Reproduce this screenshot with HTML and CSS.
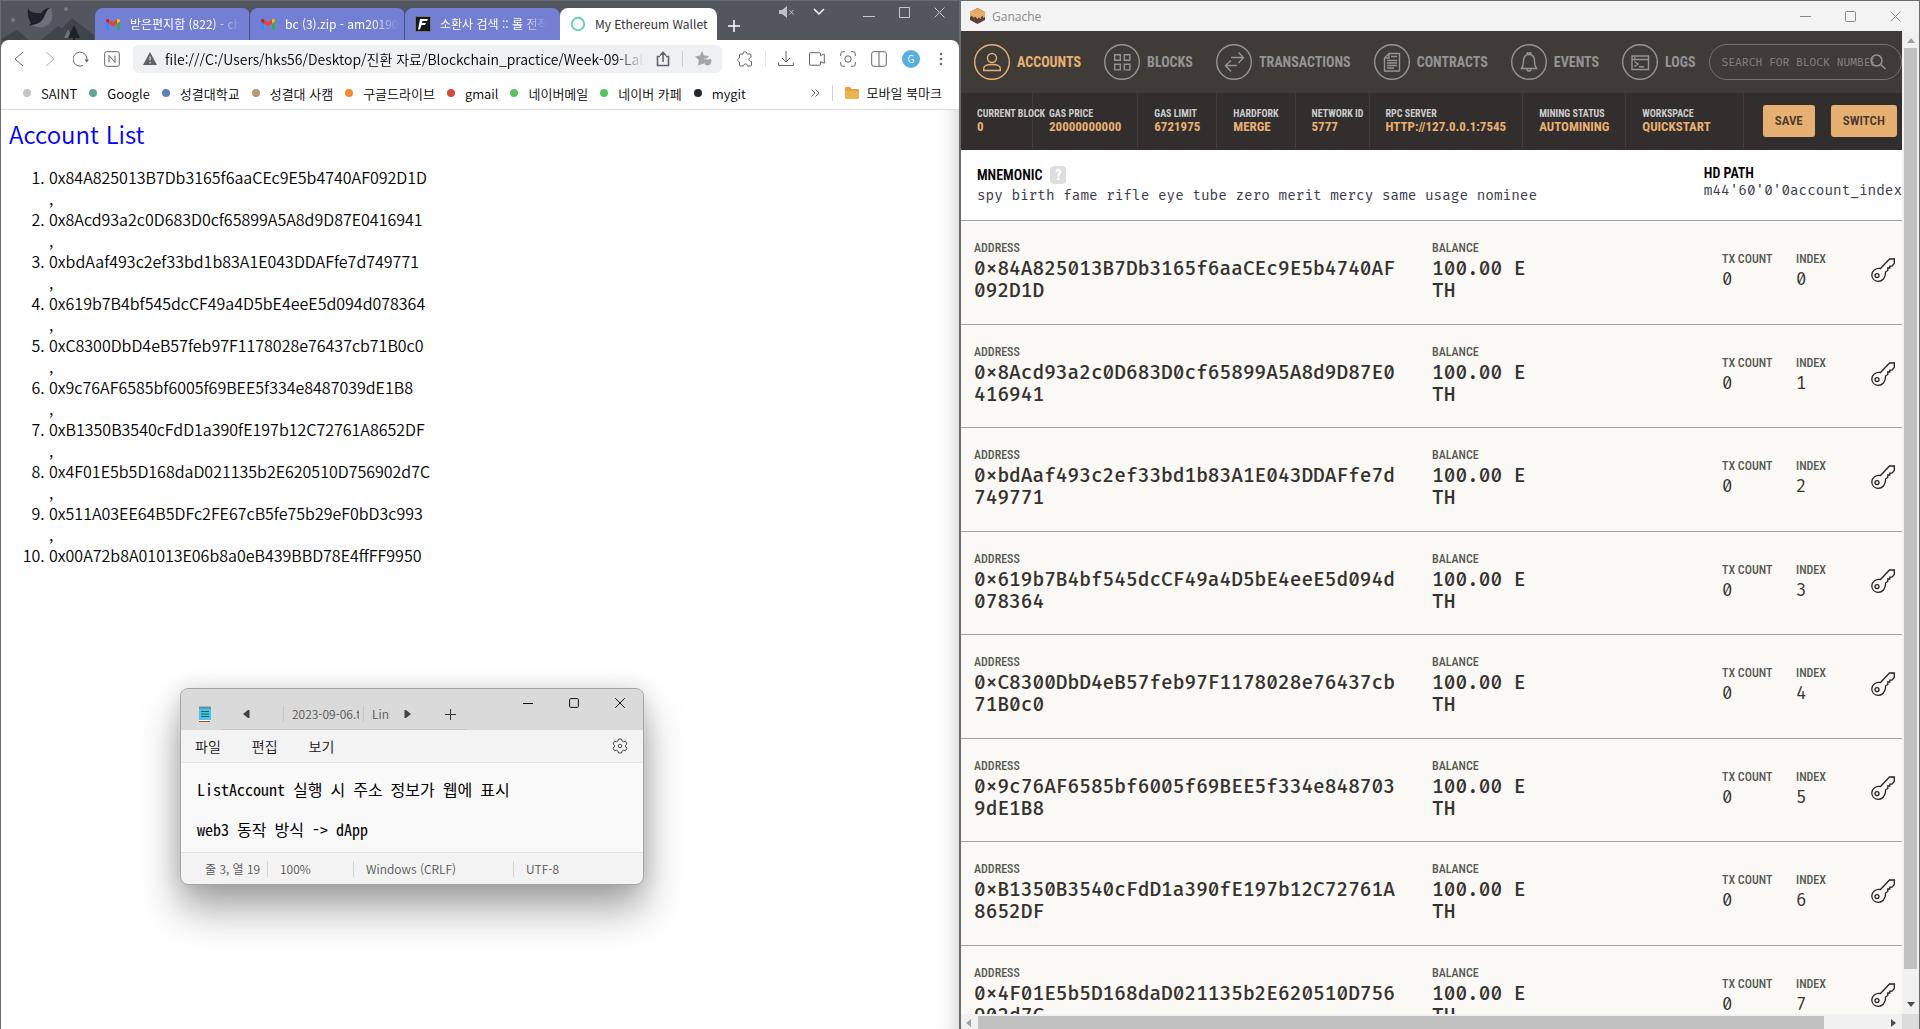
FILE: index.html
```html
<!DOCTYPE html>
<html lang="ko">
<head>
<meta charset="utf-8">
<title>My Ethereum Wallet</title>
<link rel="stylesheet" href="styles.css">
</head>
<body>
<svg class="defs" aria-hidden="true">
  <symbol id="key" viewBox="0 0 24 24"><path d="M9.500 10.500 L18.500 1 H23.300 V5.500 L21 8.200 H18.800 V10 H16.800 V12.500 L14.500 14 C15 20 11 23.500 7 23.300 C3 23 .8 20 .8 17 C.8 13 4.500 9.800 9.500 10.500Z"/><circle cx="6" cy="17.600" r="2"/></symbol>
  <symbol id="gmail" viewBox="0 0 16 12"><path fill="#4285f4" d="M1 3l3 2v7H2a1 1 0 0 1-1-1z"/><path fill="#34a853" d="M15 3l-3 2v7h2a1 1 0 0 0 1-1z"/><path fill="#c5221f" d="M1 3c0-2 2-2.500 3-1.500V5.500L1 3.500z"/><path fill="#fbbc04" d="M15 3c0-2-2-2.500-3-1.500V5.500l3-2z"/><path fill="#ea4335" d="M4 1.500l4 3 4-3V5.500L8 8.500 4 5.500z"/></symbol>
</svg>
<div class="desktop">

<section class="browser">
  <header class="tabstrip">
    <svg class="theme" width="94" height="39" viewBox="0 0 94 39" aria-hidden="true">
      <path fill="#3f434c" d="M0 38L16 29 28 39H0zM40 39L57 25l4 2L71 17 93 34v5z"/>
      <circle cx="12" cy="19" r="2" fill="#767b84"/><circle cx="65" cy="8" r="2" fill="#767b84"/>
      <path fill="#6b717b" d="M50 7c3 8 1 18-8 19-6 1-10-1-13-3 8 0 12-2 14-8 1-4 3-7 7-8z"/>
      <path fill="#1d2129" d="M27 7c2 5 7 5 13 5 2-3 5-5 9-5-7 4-3 15-18 17l-3 1 2-3c-3-4-4-9-3-15z"/>
      <path fill="#6b717b" d="M67 28l4 9h-8z"/><path fill="#1d2129" d="M73 24l6 13h-5v2h-2v-2h-5z"/>
    </svg>
    <nav class="tabs">
      <a class="tab" href="#"><svg width="16" height="12"><use href="#gmail"/></svg><span class="fade">받은편지함 (822) - ch</span></a>
      <a class="tab" href="#"><svg width="16" height="12"><use href="#gmail"/></svg><span class="fade">bc (3).zip - am20190</span></a>
      <a class="tab" href="#"><svg width="16" height="16" viewBox="0 0 16 16"><rect x=".5" y=".5" width="15" height="15" rx="1" fill="#15181c" stroke="#777"/><path fill="#fff" d="M5 3h8l-1 2H7.500L7 7h4l-1 2H6.500L5 13.500H3z"/></svg><span class="fade">소환사 검색 :: 롤 전적</span></a>
      <a class="tab active" href="#"><svg width="16" height="16" viewBox="0 0 16 16"><circle cx="8" cy="8" r="6.200" fill="none" stroke="#6bd0b4" stroke-width="2"/></svg><span>My Ethereum Wallet</span></a>
    </nav>
    <button class="newtab" aria-label="새 탭"><svg width="12" height="12" viewBox="0 0 12 12"><path d="M6 0v12M0 6h12" stroke="#fff" stroke-width="1.500"/></svg></button>
    <div class="wincontrols">
      <button aria-label="음소거"><svg width="16" height="12" viewBox="0 0 16 12"><path fill="#bfc2c6" d="M0 4h3l5-4v12L3 8H0z"/><path d="M10.500 4l4 4.500m0-4.500l-4 4.500" stroke="#bfc2c6"/></svg></button>
      <button aria-label="탭 목록"><svg width="12" height="8" viewBox="0 0 12 8"><path d="M1 1l5 5 5-5" stroke="#fff" stroke-width="1.500" fill="none"/></svg></button>
      <button aria-label="최소화"><svg width="12" height="11" viewBox="0 0 12 11"><path d="M0 9.500h12" stroke="#c5c7ca"/></svg></button>
      <button aria-label="최대화"><svg width="11" height="11" viewBox="0 0 11 11"><path d="M.5.5h10v10H.5z" stroke="#c5c7ca" fill="none"/></svg></button>
      <button aria-label="닫기"><svg width="11" height="11" viewBox="0 0 11 11"><path d="M.5.5l10 10m0-10l-10 10" stroke="#c5c7ca"/></svg></button>
    </div>
  </header>
  <div class="chrome">
    <div class="toolbar">
      <button aria-label="뒤로"><svg width="16" height="16" viewBox="0 0 16 16"><path d="M12 1L4 8l8 7"/></svg></button>
      <button aria-label="앞으로" class="dim"><svg width="16" height="16" viewBox="0 0 16 16"><path d="M4 1l8 7-8 7"/></svg></button>
      <button aria-label="새로고침"><svg width="16" height="16" viewBox="0 0 16 16"><path d="M10 14.500A7 7 0 1 1 14 9"/><path d="M11.500 8.500h4.500l-2.200 3z" fill="#5f6368" stroke="none"/></svg></button>
      <button aria-label="네이버"><svg width="16" height="16" viewBox="0 0 16 16"><rect x=".7" y=".7" width="14.600" height="14.600" rx="2"/><path d="M5 11.500v-7l6 7v-7"/></svg></button>
      <div class="address">
        <svg width="14" height="13" viewBox="0 0 14 13"><path d="M7 0l7 13H0z" fill="#5f6368" stroke="none"/><path d="M7 4.500v4M7 10v1.500" stroke="#fff"/></svg>
        <input class="url" aria-label="주소" value="file:///C:/Users/hks56/Desktop/진환 자료/Blockchain_practice/Week-09-Lab/L">
        <button aria-label="공유"><svg width="14" height="16" viewBox="0 0 14 16"><path d="M4 5.500H1.500v9h11v-9H10M7 11V1.500M4 4.500l3-3 3 3" stroke-width="1.600"/></svg></button>
        <i class="rule"></i>
        <button aria-label="북마크"><svg width="18" height="16" viewBox="0 0 18 16"><path d="M7 0l2 4.500 5 .5-2 2.500H9v5l-6 2 .8-5.500L0 5.500 5 4.500z" fill="#a3a5a8" stroke="none"/><path d="M9 8.500c1.500-1 2.500-.5 3.500.5 1-1 2.500-1.500 4-.5 0 3-1 6-4 6s-3.500-3-3.500-6z" fill="#a3a5a8" stroke="none"/></svg></button>
      </div>
      <button aria-label="확장"><svg width="16" height="16" viewBox="0 0 16 16"><path d="M3.500 3H6a2 2 0 0 1 4-.5l.2.5H13a1 1 0 0 1 1 1v2.500c-1.500 0-2 1-2 2s.8 2 2.500 2V14a1 1 0 0 1-1 1h-3c0-1.500-1-2-2-2s-2 .8-2 2H3.500a1 1 0 0 1-1-1v-3C1 11 .8 9.800.8 8.800s.7-2 1.700-2V4a1 1 0 0 1 1-1z"/></svg></button>
      <i class="rule light"></i>
      <button aria-label="다운로드"><svg width="16" height="16" viewBox="0 0 16 16"><path d="M8 0v11M4 7l4 4 4-4M.7 11.500V14.500h14.600V11.500"/></svg></button>
      <button aria-label="녹화"><svg width="16" height="14" viewBox="0 0 16 14"><path d="M1.500.7h9a1 1 0 0 1 1 1v2l3-1.500h.8v9l-3.800-1.500v2.500a1 1 0 0 1-1 1h-9a1 1 0 0 1-1-1V1.700a1 1 0 0 1 1-1z"/></svg></button>
      <button aria-label="캡처"><svg width="16" height="16" viewBox="0 0 16 16"><path d="M.7 5V2.700a2 2 0 0 1 2-2H5M11 .7h2.300a2 2 0 0 1 2 2V5M15.300 11v2.300a2 2 0 0 1-2 2H11M5 15.300H2.700a2 2 0 0 1-2-2V11"/><circle cx="8" cy="8" r="3.200"/></svg></button>
      <button aria-label="사이드바"><svg width="16" height="16" viewBox="0 0 16 16"><rect x=".7" y=".7" width="14.600" height="14.600" rx="2"/><path d="M8 1v14"/></svg></button>
      <button class="avatar" aria-label="프로필">G</button>
      <button aria-label="메뉴"><svg width="4" height="14" viewBox="0 0 4 14"><g fill="#5f6368" stroke="none"><circle cx="2" cy="2" r="1.200"/><circle cx="2" cy="7" r="1.200"/><circle cx="2" cy="12" r="1.200"/></g></svg></button>
    </div>
    <nav class="bookmarks">
      <a class="bm gray" href="#">SAINT</a>
      <a class="bm teal" href="#">Google</a>
      <a class="bm blue" href="#">성결대학교</a>
      <a class="bm tan" href="#">성결대 사캠</a>
      <a class="bm orange" href="#">구글드라이브</a>
      <a class="bm red" href="#">gmail</a>
      <a class="bm green" href="#">네이버메일</a>
      <a class="bm green" href="#">네이버 카페</a>
      <a class="bm black" href="#">mygit</a>
      <button class="more" aria-label="북마크 더보기"><svg width="9" height="8" viewBox="0 0 9 8"><path d="M.5.5L4 4 .5 7.500M4.500.5L8 4 4.500 7.500" fill="none" stroke="#5f6368"/></svg></button>
      <a class="folder" href="#"><svg width="14" height="12" viewBox="0 0 14 12"><path fill="#e9a23b" d="M0 1a1 1 0 0 1 1-1h4l1.500 2H13a1 1 0 0 1 1 1v8H0z"/><path fill="#eab54e" d="M0 4h14v7a1 1 0 0 1-1 1H1a1 1 0 0 1-1-1z"/></svg>모바일 북마크</a>
    </nav>
  </div>
  <main class="page">
    <h1>Account List</h1>
    <ol>
      <li>0x84A825013B7Db3165f6aaCEc9E5b4740AF092D1D<br>,</li>
      <li>0x8Acd93a2c0D683D0cf65899A5A8d9D87E0416941<br>,</li>
      <li>0xbdAaf493c2ef33bd1b83A1E043DDAFfe7d749771<br>,</li>
      <li>0x619b7B4bf545dcCF49a4D5bE4eeE5d094d078364<br>,</li>
      <li>0xC8300DbD4eB57feb97F1178028e76437cb71B0c0<br>,</li>
      <li>0x9c76AF6585bf6005f69BEE5f334e8487039dE1B8<br>,</li>
      <li>0xB1350B3540cFdD1a390fE197b12C72761A8652DF<br>,</li>
      <li>0x4F01E5b5D168daD021135b2E620510D756902d7C<br>,</li>
      <li>0x511A03EE64B5DFc2FE67cB5fe75b29eF0bD3c993<br>,</li>
      <li>0x00A72b8A01013E06b8a0eB439BBD78E4ffFF9950</li>
    </ol>
  </main>
</section>

<section class="ganache">
  <header class="titlebar">
    <svg width="15" height="16" viewBox="0 0 15 16"><path fill="#5b3f3c" d="M0 4l7.500-4L15 4v8l-7.500 4L0 12z"/><path fill="#e8a863" d="M0 4l7.500-4L15 4v5l-2 1V8l-2 1v2L9 9.500 7.500 11 5 8.500 4 10 2 8 0 9z"/><path d="M0 4l7.500 3.500L15 4" stroke="#f2c48c" stroke-width=".6" fill="none"/></svg>
    <span>Ganache</span>
    <div class="wincontrols2">
      <button aria-label="Minimize"><svg width="11" height="11" viewBox="0 0 11 11"><path d="M0 5.500h11"/></svg></button>
      <button aria-label="Maximize"><svg width="11" height="11" viewBox="0 0 11 11"><rect x=".5" y=".5" width="10" height="10" rx="1"/></svg></button>
      <button aria-label="Close"><svg width="11" height="11" viewBox="0 0 11 11"><path d="M.5.5l10 10m0-10l-10 10"/></svg></button>
    </div>
  </header>
  <div class="viewport">
    <div class="app">
      <nav class="mainnav">
        <a class="on" href="#"><svg viewBox="0 0 36 36"><circle cx="18" cy="18" r="17.300"/><circle cx="18" cy="14" r="4.500"/><path d="M9.700 26.500v-2c0-2.500 3-4 8.300-4s8.300 1.500 8.300 4v2z"/></svg>ACCOUNTS</a>
        <a href="#"><svg viewBox="0 0 36 36"><circle cx="18" cy="18" r="17.300"/><path d="M10.700 10.700h5.600v5.600h-5.600zM20.300 10.700h5.600v5.600h-5.600zM10.700 20.300h5.600v5.600h-5.600zM20.300 20.300h5.600v5.600h-5.600z"/></svg>BLOCKS</a>
        <a href="#"><svg viewBox="0 0 36 36"><circle cx="18" cy="18" r="17.300"/><path d="M15 13.500h12.500M22.500 8.500l5 5-5 5.500M21 21.500H9.500M15 16.500l-5.500 5 5.500 6"/></svg>TRANSACTIONS</a>
        <a href="#"><svg viewBox="0 0 36 36"><circle cx="18" cy="18" r="17.300"/><path d="M15 9.500h10.500v17.500h-15V14zM15 9.500V14h-4.500M13 16.500h10M13 19h10M13 21.500h10M13 24h7M17 12.500h6"/></svg>CONTRACTS</a>
        <a href="#"><svg viewBox="0 0 36 36"><circle cx="18" cy="18" r="17.300"/><path d="M10.500 24.500c1.500-2 2-3 2-7.500 0-4 2-6.500 5.500-6.500s5.500 2.500 5.500 6.500c0 4.500.5 5.500 2 7.500zM16 10.500V9h4v1.500M15.500 25l1.500 2h2l1.500-2"/></svg>EVENTS</a>
        <a href="#"><svg viewBox="0 0 36 36"><circle cx="18" cy="18" r="17.300"/><path d="M10 12h16.500v13.500H10zM10 15.500h16.500M12.500 17.500l3.500 2.500-3.500 2.500M17 22.700h5M12 13.700h1.500"/></svg>LOGS</a>
        <div class="search"><input aria-label="Search" placeholder="SEARCH FOR BLOCK NUMBER"><svg width="16" height="16" viewBox="0 0 16 16"><circle cx="6.500" cy="6.500" r="5.500"/><path d="M10.500 10.500l5 4.500"/></svg></div>
      </nav>
      <div class="status">
        <dl class="block"><dt>CURRENT BLOCK</dt><dd>0</dd></dl>
        <dl><dt>GAS PRICE</dt><dd>20000000000</dd></dl>
        <dl><dt>GAS LIMIT</dt><dd>6721975</dd></dl>
        <dl><dt>HARDFORK</dt><dd>MERGE</dd></dl>
        <dl class="network"><dt>NETWORK ID</dt><dd>5777</dd></dl>
        <dl><dt>RPC SERVER</dt><dd>HTTP://127.0.0.1:7545</dd></dl>
        <dl><dt>MINING STATUS</dt><dd>AUTOMINING</dd></dl>
        <dl class="workspace"><dt>WORKSPACE</dt><dd>QUICKSTART</dd></dl>
        <div class="actions"><button>SAVE</button><button>SWITCH</button></div>
      </div>
      <div class="mnemonic">
        <div><h2>MNEMONIC <button aria-label="Help">?</button></h2><p>spy birth fame rifle eye tube zero merit mercy same usage nominee</p></div>
        <div class="hd"><h2>HD PATH</h2><p>m44'60'0'0account_index</p></div>
      </div>
      <div class="accounts">
        <div class="row"><dl class="addr"><dt>ADDRESS</dt><dd>0x84A825013B7Db3165f6aaCEc9E5b4740AF092D1D</dd></dl><dl class="bal"><dt>BALANCE</dt><dd>100.00 ETH</dd></dl><dl class="num"><dt>TX COUNT</dt><dd>0</dd></dl><dl class="num"><dt>INDEX</dt><dd>0</dd></dl><button aria-label="Show keys"><svg><use href="#key"/></svg></button></div>
        <div class="row"><dl class="addr"><dt>ADDRESS</dt><dd>0x8Acd93a2c0D683D0cf65899A5A8d9D87E0416941</dd></dl><dl class="bal"><dt>BALANCE</dt><dd>100.00 ETH</dd></dl><dl class="num"><dt>TX COUNT</dt><dd>0</dd></dl><dl class="num"><dt>INDEX</dt><dd>1</dd></dl><button aria-label="Show keys"><svg><use href="#key"/></svg></button></div>
        <div class="row"><dl class="addr"><dt>ADDRESS</dt><dd>0xbdAaf493c2ef33bd1b83A1E043DDAFfe7d749771</dd></dl><dl class="bal"><dt>BALANCE</dt><dd>100.00 ETH</dd></dl><dl class="num"><dt>TX COUNT</dt><dd>0</dd></dl><dl class="num"><dt>INDEX</dt><dd>2</dd></dl><button aria-label="Show keys"><svg><use href="#key"/></svg></button></div>
        <div class="row"><dl class="addr"><dt>ADDRESS</dt><dd>0x619b7B4bf545dcCF49a4D5bE4eeE5d094d078364</dd></dl><dl class="bal"><dt>BALANCE</dt><dd>100.00 ETH</dd></dl><dl class="num"><dt>TX COUNT</dt><dd>0</dd></dl><dl class="num"><dt>INDEX</dt><dd>3</dd></dl><button aria-label="Show keys"><svg><use href="#key"/></svg></button></div>
        <div class="row"><dl class="addr"><dt>ADDRESS</dt><dd>0xC8300DbD4eB57feb97F1178028e76437cb71B0c0</dd></dl><dl class="bal"><dt>BALANCE</dt><dd>100.00 ETH</dd></dl><dl class="num"><dt>TX COUNT</dt><dd>0</dd></dl><dl class="num"><dt>INDEX</dt><dd>4</dd></dl><button aria-label="Show keys"><svg><use href="#key"/></svg></button></div>
        <div class="row"><dl class="addr"><dt>ADDRESS</dt><dd>0x9c76AF6585bf6005f69BEE5f334e8487039dE1B8</dd></dl><dl class="bal"><dt>BALANCE</dt><dd>100.00 ETH</dd></dl><dl class="num"><dt>TX COUNT</dt><dd>0</dd></dl><dl class="num"><dt>INDEX</dt><dd>5</dd></dl><button aria-label="Show keys"><svg><use href="#key"/></svg></button></div>
        <div class="row"><dl class="addr"><dt>ADDRESS</dt><dd>0xB1350B3540cFdD1a390fE197b12C72761A8652DF</dd></dl><dl class="bal"><dt>BALANCE</dt><dd>100.00 ETH</dd></dl><dl class="num"><dt>TX COUNT</dt><dd>0</dd></dl><dl class="num"><dt>INDEX</dt><dd>6</dd></dl><button aria-label="Show keys"><svg><use href="#key"/></svg></button></div>
        <div class="row"><dl class="addr"><dt>ADDRESS</dt><dd>0x4F01E5b5D168daD021135b2E620510D756902d7C</dd></dl><dl class="bal"><dt>BALANCE</dt><dd>100.00 ETH</dd></dl><dl class="num"><dt>TX COUNT</dt><dd>0</dd></dl><dl class="num"><dt>INDEX</dt><dd>7</dd></dl><button aria-label="Show keys"><svg><use href="#key"/></svg></button></div>
      </div>
    </div>
    <div class="vbar"><svg width="8" height="5" viewBox="0 0 8 5"><path fill="#a0a0a0" d="M4 0l4 5H0z"/></svg><i></i><svg width="8" height="5" viewBox="0 0 8 5"><path fill="#505050" d="M4 5L0 0h8z"/></svg></div>
    <div class="hbar"><svg width="5" height="8" viewBox="0 0 5 8"><path fill="#a0a0a0" d="M0 4l5-4v8z"/></svg><i></i><svg width="5" height="8" viewBox="0 0 5 8"><path fill="#505050" d="M5 4L0 0v8z"/></svg></div>
    <div class="corner"></div>
  </div>
</section>

<section class="notepad">
  <header>
    <div class="ntabs">
      <svg class="nicon" width="14" height="16" viewBox="0 0 14 16"><path fill="#4cc2e4" d="M1 1.500h12V14H1z"/><path stroke="#14606f" stroke-dasharray="1 1" stroke-width="2" d="M1.500 1.500h11"/><path stroke="#14606f" d="M3 5.500h8M3 8h8M3 10.500h8"/><path fill="#fff" d="M1 14h12v1H1z"/><path fill="#a3501b" d="M1 15h11v1H1z"/></svg>
      <div class="nlist">
        <button class="prev" aria-label="이전 탭"><svg width="7" height="8" viewBox="0 0 7 8"><path d="M0 4l5-4h1.500v8H5z" fill="#444"/></svg></button>
        <span class="nt first">2023-09-06.t</span><span class="nt second">Link</span>
        <button aria-label="다음 탭"><svg width="7" height="8" viewBox="0 0 7 8"><path d="M7 4L2 0H.5v8H2z" fill="#444"/></svg></button>
        <button class="plus" aria-label="새 탭"><svg width="11" height="11" viewBox="0 0 11 11"><path d="M5.500 0v11M0 5.500h11" stroke="#333"/></svg></button>
      </div>
    </div>
    <div class="nwin">
      <button aria-label="최소화"><svg width="10" height="10" viewBox="0 0 10 10"><path d="M0 5.500h10"/></svg></button>
      <button aria-label="최대화"><svg width="10" height="10" viewBox="0 0 10 10"><rect x=".6" y=".6" width="8.800" height="8.800" rx="1"/></svg></button>
      <button aria-label="닫기"><svg width="10" height="10" viewBox="0 0 10 10"><path d="M.3.3l9.400 9.400m0-9.400L.3 9.700"/></svg></button>
    </div>
  </header>
  <div class="nmenu">
    <button>파일</button><button>편집</button><button>보기</button>
    <button class="gear" aria-label="설정"><svg width="16" height="16" viewBox="0 0 16 16"><path fill="none" stroke="#444" stroke-linejoin="round" d="M6.500 1h3l.6 2 1.400.8 2-.5 1.500 2.600L13.500 7.300v1.500L15 10.200l-1.500 2.500-2-.5-1.400.8-.6 2h-3l-.6-2-1.400-.8-2 .5L1 10.200l1.500-1.400V7.300L1 5.900l1.500-2.600 2 .5L5.900 3z"/><circle cx="8" cy="8" r="1.800" fill="none" stroke="#444"/></svg></button>
  </div>
  <div class="ntext"><p>ListAccount 실행 시 주소 정보가 웹에 표시</p><p>web3 동작 방식 -&gt; dApp</p></div>
  <footer><span class="c1">줄 3, 열 19</span><span class="c2">100%</span><span class="c3">Windows (CRLF)</span><span class="c4">UTF-8</span></footer>
</section>
</div>
</body>
</html>
```
FILE: styles.css
```css
* { box-sizing: border-box; }
body { margin: 0; font-family: "Noto Sans", "Noto Sans CJK KR", sans-serif; font-size: 13px; color: #000; }
button { border: 0; padding: 0; background: none; font: inherit; color: inherit; display: flex; align-items: center; justify-content: center; flex: none; }
a { color: inherit; text-decoration: none; }
svg { display: block; flex: none; }
dl, dd, p, h1, h2 { margin: 0; }
.defs { position: absolute; width: 0; height: 0; }
.desktop { position: relative; display: grid; grid-template-columns: minmax(0, 1fr) minmax(0, 1fr); height: 100vh; overflow: hidden; }

/* Browser window */
.browser { display: flex; flex-direction: column; min-height: 0; border: solid #6b6c6e; border-width: 1px 1px 0 1px; background: #52565e; font-family: "Noto Sans CJK KR", sans-serif; font-weight: 350; }
.tabstrip { display: flex; align-items: flex-end; height: 39px; flex: none; }
.tabs { display: flex; }
.tab { display: flex; align-items: center; gap: 9px; width: 155px; height: 32px; padding: 0 6px 0 10px; border-radius: 8px 8px 0 0; background: #737fd2; color: #fff; white-space: nowrap; font-size: 12px; font-weight: 400; line-height: 32px; }
.tab .fade { mask-image: linear-gradient(90deg, #000 75%, transparent); }
.tab + .tab:not(.active) { box-shadow: -1px 0 #4a5080; }
.tab.active { background: #fff; color: #333; width: 157px; }
.newtab { width: 34px; height: 28px; }
.wincontrols { display: flex; align-self: flex-start; margin-left: auto; height: 22px; gap: 24px; padding-right: 14px; }
.wincontrols button:first-child { margin-right: -6px; }
.wincontrols button:nth-child(2) { margin-right: 14px; }
.chrome { background: #fff; border-radius: 8px 8px 0 0; border-bottom: 1px solid #dadce0; flex: none; }
.toolbar { display: flex; align-items: center; height: 37px; padding: 0 16px 0 10px; gap: 15px; }
.toolbar svg { fill: none; stroke: #5f6368; stroke-width: 1; }
.toolbar .dim { opacity: .5; }
.address { flex: 1; min-width: 0; display: flex; align-items: center; gap: 12px; height: 28px; padding: 0 9px 0 10px; margin-left: -2px; border-radius: 6px; background: #eff0f2; }
.address > svg { margin: 0 -4px 0 0; }
.url { flex: 1; min-width: 0; border: 0; padding: 0; background: none; outline: 0; font: 350 14px "Noto Sans CJK KR", sans-serif; height: 24px; mask-image: linear-gradient(90deg, #000 94%, transparent); }
.rule { width: 1px; height: 16px; background: #cfd0d3; }
.rule.light { background: #e2e3e5; margin: 0 -3px; }
.avatar { width: 18px; height: 18px; border-radius: 9px; background: #57aee0; color: #fff; font-size: 10px; margin-right: 4px; }
.bookmarks { display: flex; align-items: center; height: 32px; padding: 0 17px 0 22px; gap: 12px; white-space: nowrap; }
.bm, .folder { display: flex; align-items: center; gap: 10px; }
.bm::before { content: ""; width: 8px; height: 8px; border-radius: 4px; background: currentColor; }
.bm { color: #000; }
.gray::before { background: #c4c4c4; } .teal::before { background: #62a39b; } .blue::before { background: #5b82b8; }
.tan::before { background: #b89a72; } .orange::before { background: #f28a30; } .red::before { background: #d34b3e; }
.green::before { background: #57c264; } .black::before { background: #23272e; }
.more { margin-left: auto; }
.folder { gap: 8px; padding-left: 12px; border-left: 1px solid #cfd0d3; line-height: 16px; }
.page { flex: 1; min-height: 0; padding: 8px; background: #fff; overflow: hidden; box-shadow: inset -20px 0 20px -18px rgba(0,0,0,.2); font-size: 16px; line-height: 21px; }
.page h1 { font-size: 24px; line-height: 32px; font-weight: 350; color: #00f; }
.page ol { margin: 17px 0 0; padding-left: 40px; }

/* Ganache window */
.ganache { display: flex; flex-direction: column; min-height: 0; border: solid #6b6c6e; border-width: 1px 1px 0 1px; background: #f3f3f3; font-family: "Roboto Condensed", Roboto, sans-serif; }
.titlebar { display: flex; align-items: center; gap: 7px; height: 30px; padding: 0 18px 0 9px; flex: none; font: 12px "Open Sans", sans-serif; color: #8b8b8b; }
.wincontrols2 { display: flex; gap: 34px; margin-left: auto; }
.wincontrols2 svg { fill: none; stroke: #888; }
.viewport { flex: 1; min-height: 0; display: grid; grid-template-columns: minmax(0, 1fr) 17px; grid-template-rows: minmax(0, 1fr) 15px; background: #f1f1f1; }
.app { overflow: hidden; background: #fff; }
.mainnav { display: flex; align-items: center; height: 62px; padding-left: 13px; gap: 23px; background: #3f3c38; }
.mainnav a { display: flex; align-items: center; gap: 7px; flex: none; color: #949494; font-size: 14px; font-weight: 700; }
.mainnav svg { width: 36px; height: 36px; fill: none; stroke: #949494; stroke-width: 1.400; }
.mainnav .on { color: #e9b072; }
.mainnav .on svg { stroke: #e9b072; }
.search { flex: 1; min-width: 0; height: 36px; display: flex; align-items: center; margin-left: -10px; padding: 0 15px 0 12px; border: 1px solid #76736f; border-radius: 18px; }
.search input { flex: 1; min-width: 0; border: 0; padding: 0; background: none; outline: 0; font: 11px "Fira Code", "Fira Mono", "Liberation Mono", monospace; color: #85827e; }
.search input::placeholder { color: #85827e; }
.mainnav .search svg { width: 16px; height: 16px; stroke: #949494; stroke-width: 1.500; margin-left: -4px; }
.status { display: flex; height: 57px; padding-bottom: 2px; background: #312e2d; }
.status dl { padding: 15px 16px 0; border-right: 1px solid #403d3b; white-space: nowrap; flex: none; font-weight: 700; }
.status dt { font-size: 10px; line-height: 12px; color: #ccc; }
.status dd { font-size: 13px; line-height: 13px; color: #e9b072; }
.status .block { width: 72px; }
.status .network { width: 74px; }
.status .workspace { width: 118px; }
.actions { display: flex; align-items: center; gap: 16px; padding-right: 5px; margin-left: auto; }
.actions button { height: 32px; padding: 0 12px; border-radius: 3px; background: #e6b072; color: #4a382c; font-size: 13px; font-weight: 600; }
.mnemonic { display: flex; justify-content: space-between; height: 71px; padding: 16px 0 0 16px; border-bottom: 1px solid #a3a3a3; white-space: nowrap; }
.mnemonic h2 { display: flex; align-items: center; gap: 8px; font-size: 14px; font-weight: 600; line-height: 18px; }
.mnemonic h2 button { width: 16px; height: 18px; border-radius: 4px; background: #dedede; color: #fff; font-weight: 700; }
.mnemonic p { font: 14px/18px "Fira Code", "Fira Mono", "Liberation Mono", monospace; color: #3b3b4a; padding-top: 3px; }
.hd { margin-top: -2px; }
.mnemonic .hd p { padding-top: 0; }
.accounts { background: #faf9f6; }
.row { display: grid; grid-template-columns: 458fr 290fr 74px 75px 24px; align-items: center; height: 104px; padding: 0 7px 5px 13px; border-bottom: 1px solid #a3a3a3; }
.row:nth-child(even) { height: 103px; }
.row dt { font-size: 12px; line-height: 20px; font-weight: 500; color: #555852; }
.row dd { font: 500 19px/22px "Fira Code", "Fira Mono", "Liberation Mono", monospace; color: #35322e; }
.addr dd { max-width: 430px; word-break: break-all; }
.bal dd { max-width: 100px; word-break: break-all; }
.row .num dd { font-size: 17px; font-weight: 400; }
.row svg { width: 24px; height: 24px; fill: none; stroke: #222; stroke-width: 1.300; }
.vbar { display: flex; flex-direction: column; align-items: center; padding: 7px 0; }
.vbar i { width: 13px; height: 95%; margin: 5px 0 auto; background: #c1c1c1; }
.hbar { display: flex; align-items: center; padding: 2px 6px 0 5px; }
.hbar i { width: 91%; height: 13px; margin: 0 auto 0 7px; background: #c1c1c1; }
.corner { background: #dcdcdc; }

/* Notepad window, floating over the browser */
.notepad { position: absolute; left: 180px; top: 688px; width: 464px; border: 1px solid #a5a5a5; border-radius: 8px; background: #f3f3f3; overflow: hidden; box-shadow: 0 24px 40px rgba(0,0,0,.36), 0 0 20px rgba(0,0,0,.12); font-family: "Noto Sans CJK KR", sans-serif; font-size: 12px; font-weight: 350; color: #555; }
.notepad header { display: flex; justify-content: space-between; height: 41px; background: #dadada; }
.ntabs { display: flex; align-items: flex-end; }
.nicon { margin: 0 9px 8px 17px; }
.nlist { display: flex; align-items: center; width: 246px; height: 31px; border-bottom: 1px solid #cacaca; }
.prev { margin: 0 33px 0 22px; }
.nt { height: 16px; line-height: 16px; border-left: 1px solid #c6c6c6; overflow: hidden; white-space: nowrap; padding-left: 8px; }
.first { width: 76px; margin-right: 4px; }
.second { width: 27px; margin-right: 14px; }
.plus { margin-left: 34px; }
.nwin { display: flex; gap: 36px; padding: 9px 18px 0 0; align-self: flex-start; }
.nwin svg { fill: none; stroke: #111; }
.nmenu { display: flex; align-items: center; gap: 31px; height: 33px; padding: 0 15px 0 14px; border-bottom: 1px solid #e3e3e3; font-size: 14px; color: #111; }
.gear { margin-left: auto; }
.ntext { height: 89px; padding: 16px; background: #f9f9f9; font: 16px/20px "Noto Sans Mono CJK KR", monospace; color: #000; }
.ntext p { margin-bottom: 20px; }
.notepad footer { display: flex; align-items: center; height: 32px; border-top: 1px solid #e3e3e3; padding-left: 24px; }
.notepad footer span { line-height: 16px; white-space: nowrap; flex: none; }
.c1 { width: 62px; }
.c2, .c3, .c4 { border-left: 1px solid #d6d6d6; padding-left: 12px; }
.c2 { width: 86px; }
.c3 { width: 160px; }
```
